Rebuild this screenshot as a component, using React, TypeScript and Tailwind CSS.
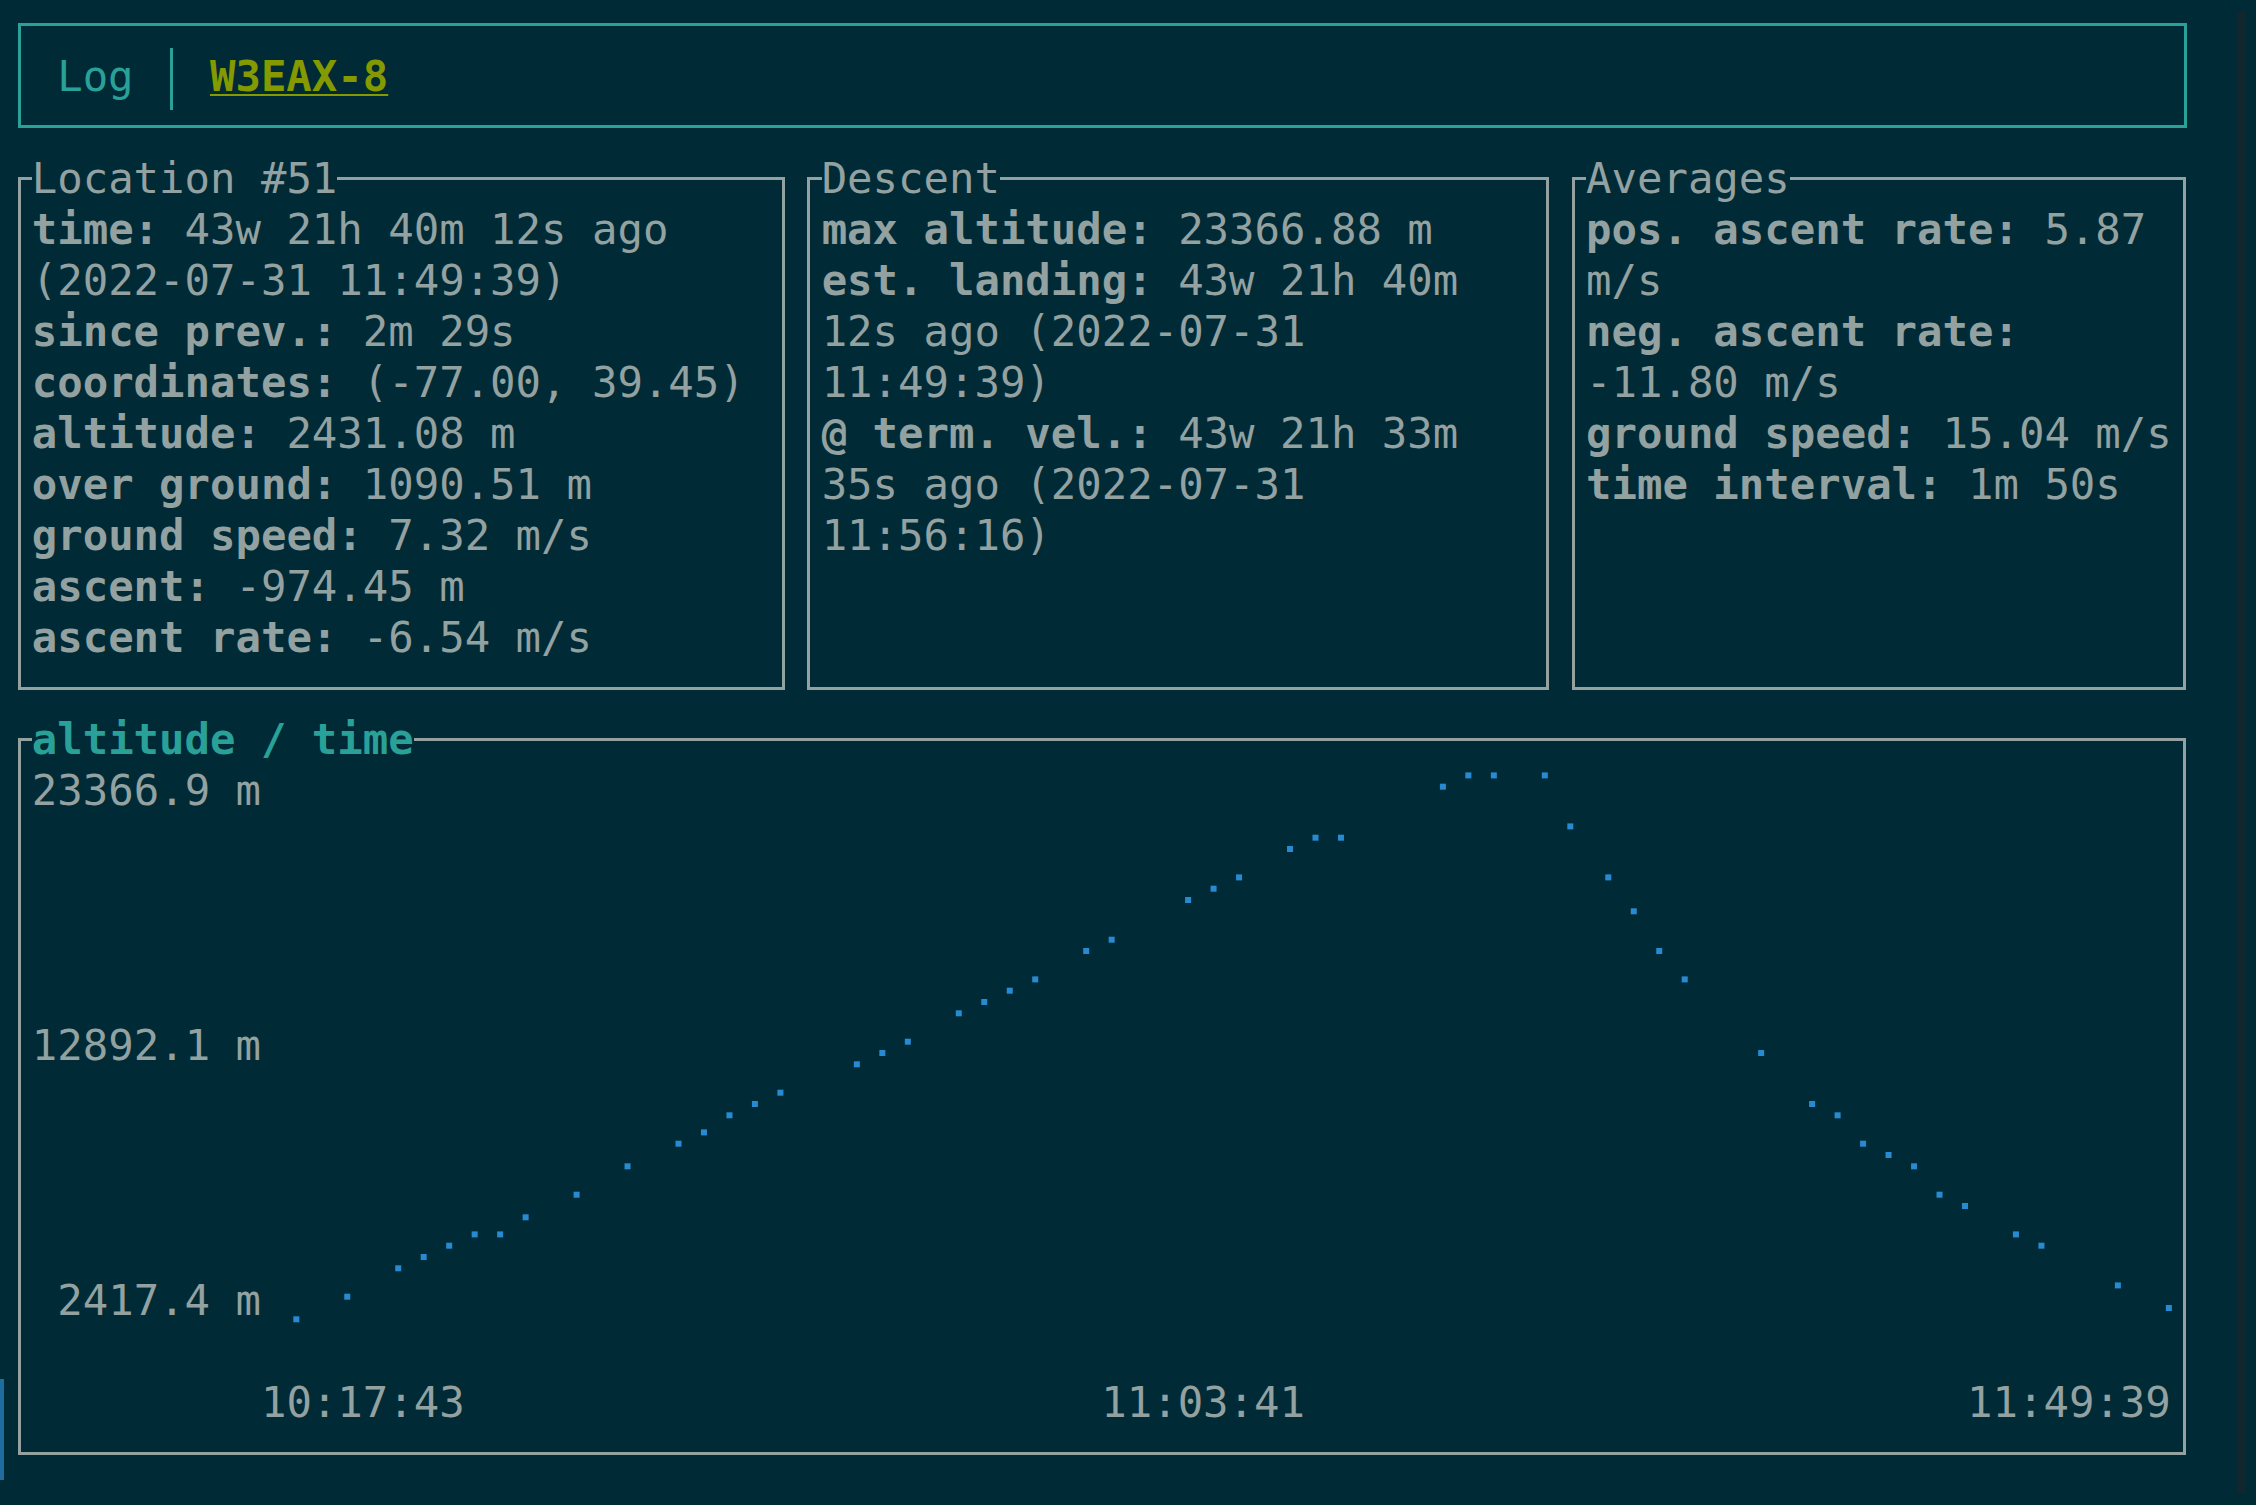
import React from "react";

type Line = [string, string];

// terminal cell grid of the reference
const X0 = 6.26;
const CW = 25.48;
const RH = 51;
const SUB_X = [9.5, 22];
const SUB_Y = [10.4, 21.7, 33, 44.3];
// chart content origin (col 1, row 15)
const CHART_X = X0 + CW;
const CHART_Y = 15 * RH;

const locationLines: Line[] = [
  ["time:", " 43w 21h 40m 12s ago"],
  ["", "(2022-07-31 11:49:39)"],
  ["since prev.:", " 2m 29s"],
  ["coordinates:", " (-77.00, 39.45)"],
  ["altitude:", " 2431.08 m"],
  ["over ground:", " 1090.51 m"],
  ["ground speed:", " 7.32 m/s"],
  ["ascent:", " -974.45 m"],
  ["ascent rate:", " -6.54 m/s"],
];

const descentLines: Line[] = [
  ["max altitude:", " 23366.88 m"],
  ["est. landing:", " 43w 21h 40m"],
  ["", "12s ago (2022-07-31"],
  ["", "11:49:39)"],
  ["@ term. vel.:", " 43w 21h 33m"],
  ["", "35s ago (2022-07-31"],
  ["", "11:56:16)"],
];

const averageLines: Line[] = [
  ["pos. ascent rate:", " 5.87"],
  ["", "m/s"],
  ["neg. ascent rate:", ""],
  ["", "-11.80 m/s"],
  ["ground speed:", " 15.04 m/s"],
  ["time interval:", " 1m 50s"],
];

// dot positions as read off the screenshot (page px / 1.43878)
const rawDots: [number, number][] = [
  [205, 916], [241, 902], [276, 881], [294, 873], [312, 865], [330, 858],
  [347, 858], [365, 846], [400, 829], [435, 810], [471, 795], [489, 787],
  [507, 774], [524, 767], [542, 759], [595, 739], [613, 731], [631, 723],
  [667, 704], [684, 695], [702, 688], [720, 680], [755, 660], [773, 652],
  [826, 625], [843, 617], [861, 609], [897, 589], [915, 581], [932, 581],
  [1003, 546], [1021, 539], [1038, 539], [1074, 539], [1092, 574],
  [1118, 609], [1136, 633], [1153, 660], [1171, 680], [1224, 731],
  [1259, 767], [1277, 774], [1295, 795], [1312, 802], [1330, 810],
  [1348, 829], [1366, 838], [1401, 858], [1419, 865], [1472, 893],
  [1508, 909],
];

// snap each point onto the braille dot grid
const dots = rawDots.map(([sx, sy]) => {
  const fx = sx * 1.43878;
  const fy = sy * 1.43878;
  const c = (fx - X0) / CW;
  const col = Math.floor(c);
  const side = c - col < 0.62 ? 0 : 1;
  const row = Math.floor(fy / RH);
  let best = 0;
  let bestDist = Infinity;
  for (let r = row - 1; r <= row + 1; r++) {
    for (const o of SUB_Y) {
      const y = r * RH + o;
      if (Math.abs(y - fy) < bestDist) {
        bestDist = Math.abs(y - fy);
        best = y;
      }
    }
  }
  return {
    x: X0 + col * CW + SUB_X[side] - CHART_X,
    y: best - CHART_Y,
  };
});

const TextLine: React.FC<{ line: Line }> = ({ line }) => (
  <div className="h-[51px] whitespace-pre">
    <span className="font-bold">{line[0]}</span>
    {line[1]}
  </div>
);

const Panel: React.FC<{ title: string; lines: Line[]; width: string }> = ({
  title,
  lines,
  width,
}) => (
  <fieldset
    className={`${width} min-w-0 shrink-0 border-[3px] border-[#93a1a1] px-[11.24px] pb-[24px]`}
  >
    <legend className="whitespace-pre leading-[51px]">{title}</legend>
    <div className="h-[459px]">
      {lines.map((line, i) => (
        <TextLine key={i} line={line} />
      ))}
    </div>
  </fieldset>
);

const App: React.FC = () => {
  return (
    <div className="relative min-h-screen w-full overflow-hidden bg-[#002b36] pl-[17.5px] pt-[22.5px] font-['DejaVu_Sans_Mono',monospace] text-[42.3px] leading-[51px] text-[#93a1a1]">
      {/* Tabs */}
      <div className="flex h-[105px] w-[2169px] items-start gap-[36.7px] border-[3px] border-[#2aa198] pl-[36.7px] pt-[25.5px]">
        <span className="text-[#2aa198]">Log</span>
        <div className="-mt-[3px] h-[62px] w-[3px] bg-[#2aa198]" />
        <span className="font-bold text-[#859900] underline decoration-2 underline-offset-[3px]">
          W3EAX-8
        </span>
      </div>

      {/* Info panels */}
      <div className="mt-[25.5px] flex gap-[22.5px]">
        <Panel title="Location #51" lines={locationLines} width="w-[767.4px]" />
        <Panel title="Descent" lines={descentLines} width="w-[741.9px]" />
        <Panel title="Averages" lines={averageLines} width="w-[614.5px]" />
      </div>

      {/* Chart */}
      <fieldset className="mt-[24px] w-[2168.8px] min-w-0 border-[3px] border-[#93a1a1] px-[11.24px] pb-[24px]">
        <legend className="whitespace-pre font-bold leading-[51px] text-[#2aa198]">
          altitude / time
        </legend>
        <div className="relative flex h-[663px] flex-col">
          <div className="h-[51px] w-[229.3px] whitespace-pre text-right">23366.9 m</div>
          <div className="h-[204px]" />
          <div className="h-[51px] w-[229.3px] whitespace-pre text-right">12892.1 m</div>
          <div className="h-[204px]" />
          <div className="h-[51px] w-[229.3px] whitespace-pre text-right">2417.4 m</div>
          <div className="h-[51px]" />
          <div className="h-[51px] whitespace-pre">
            {"         10:17:43                         11:03:41                          11:49:39"}
          </div>
          <svg className="pointer-events-none absolute inset-0 h-full w-full">
            {dots.map((d, i) => (
              <rect
                key={i}
                x={d.x - 3}
                y={d.y - 3}
                width={6}
                height={6}
                fill="#268bd2"
              />
            ))}
          </svg>
        </div>
      </fieldset>

      {/* terminal chrome */}
      <div className="absolute left-0 top-[1379px] h-[101px] w-[4px] bg-[#1f6d9e]" />
      <div className="absolute bottom-[12px] right-[10px] top-[12px] w-[9px] bg-[#11272d]" />
    </div>
  );
};

export default App;
